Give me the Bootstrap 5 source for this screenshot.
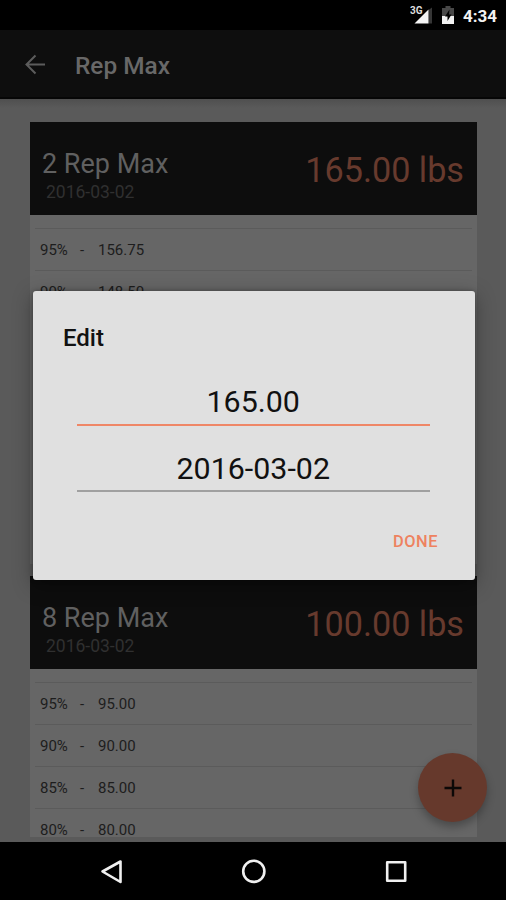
<!DOCTYPE html>
<html lang="en">
<head>
<meta charset="utf-8">
<meta name="viewport" content="width=device-width, initial-scale=1">
<title>Rep Max</title>
<link href="https://cdn.jsdelivr.net/npm/bootstrap@5.3.0/dist/css/bootstrap.min.css" rel="stylesheet">
<style>
body{font-family:Roboto,"Liberation Sans",sans-serif;background:#000}
.screen{width:506px;height:900px}
.status-bar{height:30px;padding-right:9px}
.clock{font-size:17px;font-weight:700;line-height:30px;margin-left:8px;color:#f2f2f2;padding-top:1px}
.app-bar{height:69px;background:#0e0e0e;border-bottom:2px solid #060606;padding-left:23px}
.app-title{font-size:24.4px;font-weight:500;line-height:30px;color:#686868;margin:4px 0 0 28px}
.page{height:743px;background:linear-gradient(#4f4f4f,#5a5a5a 9px);padding:23px 29px 5px 30px}
.list-clip{height:715px}
.rep-card{background:#666;width:447px}
.rep-head{height:93px;background:#0d0d0d;padding:25px 13px 0 12px}
.rep-title{font-size:27px;line-height:33px;color:#606060;padding-top:1px}
.rep-date{font-size:17.5px;line-height:20px;color:#303030;padding:1px 0 0 4px}
.rep-weight{font-size:34.2px;line-height:46px;color:#673a2d}
.rep-list{padding:13px 5px 0}
.rep-line{height:41.9px;border-top:1px solid #5b5b5b;font-size:15px;line-height:42px;color:#1d1d1d;padding-left:5px}
.rep-line .pct{width:40px}
.rep-line .dash{width:18px}
.card-one{height:442px;margin-bottom:12px}
.card-two{height:261px}
.edit-dialog{top:291px;left:33px;width:441.5px;height:289px;background:#e0e0e0;border-radius:3px;padding:31px 45px 0 44px;box-shadow:0 5px 20px rgba(0,0,0,.34),0 0 4px rgba(0,0,0,.3);color:#111}
.dialog-title{font-size:24px;font-weight:500;line-height:32px;margin-left:-14px}
.field{font-size:30.4px;line-height:40px;text-align:center}
.field-weight{margin-top:28px;height:44px;border-bottom:2.5px solid #ef8767}
.field-date{margin-top:23px;height:43px;border-bottom:2px solid #a0a0a0}
.done{font-size:16.4px;font-weight:500;line-height:20px;letter-spacing:.5px;color:#ee8260;margin:40px -8.500px 0 0}
.fab{left:418px;top:753px;width:69px;height:69px;background:#66392c;box-shadow:0 5px 9px rgba(0,0,0,.28)}
.nav-keys{height:58px}
.nav-keys svg{display:block}
</style>
</head>
<body>
<div class="screen position-relative overflow-hidden">
  <div class="status-bar d-flex justify-content-end">
    <svg width="45" height="30" viewBox="0 0 45 30">
      <path d="M22 7.500v16h-3.500V10z" fill="#363636"/>
      <path d="M18.500 9.500v14H4.500z" fill="#f4f4f4"/>
      <text x="0" y="14" font-family="Roboto,sans-serif" font-size="10" font-weight="700" fill="#ddd" stroke="#000" stroke-width="2" paint-order="stroke">3G</text>
      <path d="M32 8h3.500V6h5v2H44v8H32z" fill="#484848"/>
      <path d="M32 16h12v8H32z" fill="#f2f2f2"/>
      <path d="M39.500 9.500L35 16.500h2.500V21l4-6.500H39z" fill="#000"/>
    </svg>
    <span class="clock">4:34</span>
  </div>
  <header class="app-bar d-flex align-items-center">
    <svg width="24" height="24" viewBox="0 0 24 24" fill="none" stroke="#5c5c5c" stroke-width="2"><path d="M22 12.500H4M12.500 3.500l-9 9 9 9"/></svg>
    <h1 class="app-title">Rep Max</h1>
  </header>
  <main class="page">
    <div class="list-clip overflow-hidden">
      <section class="rep-card card-one overflow-hidden">
        <div class="rep-head d-flex justify-content-between">
          <div><div class="rep-title">2 Rep Max</div><div class="rep-date">2016-03-02</div></div>
          <div class="rep-weight">165.00 lbs</div>
        </div>
        <div class="rep-list">
          <div class="rep-line d-flex"><span class="pct">95%</span><span class="dash">-</span><span>156.75</span></div>
          <div class="rep-line d-flex"><span class="pct">90%</span><span class="dash">-</span><span>148.50</span></div>
        </div>
      </section>
      <section class="rep-card card-two">
        <div class="rep-head d-flex justify-content-between">
          <div><div class="rep-title">8 Rep Max</div><div class="rep-date">2016-03-02</div></div>
          <div class="rep-weight">100.00 lbs</div>
        </div>
        <div class="rep-list">
          <div class="rep-line d-flex"><span class="pct">95%</span><span class="dash">-</span><span>95.00</span></div>
          <div class="rep-line d-flex"><span class="pct">90%</span><span class="dash">-</span><span>90.00</span></div>
          <div class="rep-line d-flex"><span class="pct">85%</span><span class="dash">-</span><span>85.00</span></div>
          <div class="rep-line d-flex"><span class="pct">80%</span><span class="dash">-</span><span>80.00</span></div>
        </div>
      </section>
    </div>
  </main>
  <nav class="nav-keys d-flex justify-content-center align-items-center">
    <svg width="506" height="58" viewBox="0 0 506 58" fill="none" stroke="#f0f0f0" stroke-width="2.600" stroke-linejoin="round">
      <path d="M120.500 19.500v20.500L102.500 29.500z"/>
      <circle cx="253.800" cy="29.300" r="10.600"/>
      <rect x="387.200" y="20.200" width="18" height="18.600"/>
    </svg>
  </nav>
  <div class="fab position-absolute rounded-circle d-flex align-items-center justify-content-center">
    <svg width="18" height="18" viewBox="0 0 18 18" stroke="#0c0807" stroke-width="2.400"><path d="M.500 9h17M9 .500v17"/></svg>
  </div>
  <div class="edit-dialog position-absolute">
    <h2 class="dialog-title mb-0">Edit</h2>
    <div class="field field-weight">165.00</div>
    <div class="field field-date">2016-03-02</div>
    <div class="done text-end">DONE</div>
  </div>
</div>
<script src="https://cdn.jsdelivr.net/npm/bootstrap@5.3.0/dist/js/bootstrap.bundle.min.js"></script>
</body>
</html>
